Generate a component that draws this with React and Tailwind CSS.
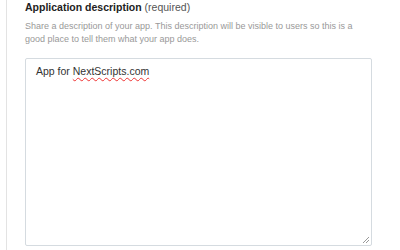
import React from 'react';

const App = () => {
  return (
    <div className="w-[400px] h-[250px] bg-white overflow-hidden font-['Liberation_Sans',Arial,sans-serif]">
      <div className="ml-[6px] h-full border-l border-[#e3e3e3] pl-[18px] pt-[1px]">
        <div className="text-[10.5px] leading-[13px] text-[#222]">
          <span className="font-bold">Application description</span>{' '}
          <span className="text-[#555]">(required)</span>
        </div>
        <p className="mt-[6px] w-[346px] text-[9px] leading-[13px] text-[#999]">
          Share a description of your app. This description will be visible to users so this is a good place to tell them what your app does.
        </p>
        <div className="relative mt-[12px] w-[347px] h-[188px] border border-[#d5dbe0] rounded-[2px] px-[10px] pt-[6px]">
          <div className="text-[10.5px] leading-[13px] text-[#333]">
            App for{' '}
            <span className="underline decoration-wavy decoration-[#e33] decoration-1 underline-offset-[2px]">
              NextScripts.com
            </span>
          </div>
          <svg className="absolute right-[1px] bottom-[1px]" width="8" height="8" viewBox="0 0 8 8">
            <path d="M7 1 L1 7 M7 4 L4 7" stroke="#999" strokeWidth="1" fill="none" />
          </svg>
        </div>
      </div>
    </div>
  );
};

export default App;
